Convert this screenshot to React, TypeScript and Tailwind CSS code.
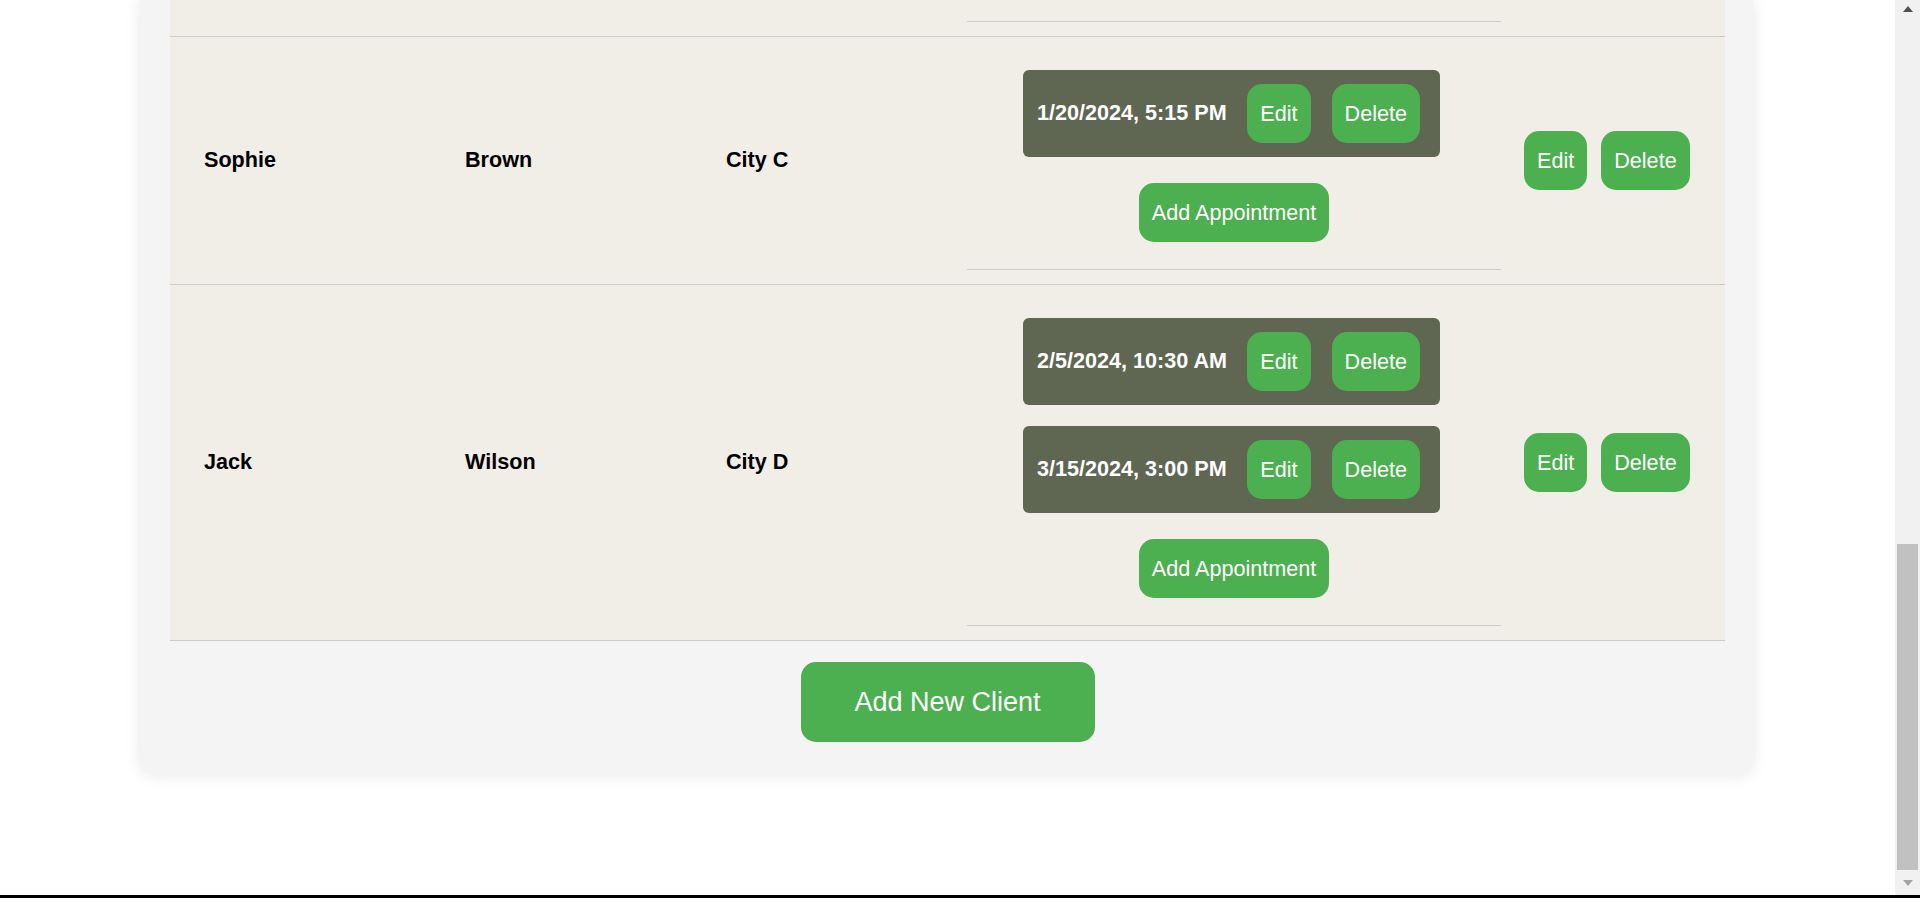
import React from "react";

interface IClient {
  id: number;
  firstName: string;
  lastName: string;
  city: string;
  appointments: string[];
}

const clients: IClient[] = [
  { id: 3, firstName: "Sophie", lastName: "Brown", city: "City C", appointments: ["1/20/2024, 5:15 PM"] },
  {
    id: 4,
    firstName: "Jack",
    lastName: "Wilson",
    city: "City D",
    appointments: ["2/5/2024, 10:30 AM", "3/15/2024, 3:00 PM"],
  },
];

const GreenButton = ({ label }: { label: string }) => (
  <button className="h-[59px] px-[13px] rounded-[15px] bg-[#4caf50] text-white text-[21.6px] leading-none whitespace-nowrap">
    {label}
  </button>
);

const AppointmentCard = ({ date }: { date: string }) => (
  <div className="w-[417px] flex flex-row items-center justify-between py-[14px] pl-[14px] pr-[20px] rounded-[6px] bg-[#5f6652]">
    <span className="text-white font-bold text-[21.6px] whitespace-nowrap">{date}</span>
    <div className="flex flex-row gap-[21px]">
      <GreenButton label="Edit" />
      <GreenButton label="Delete" />
    </div>
  </div>
);

const ClientRow = ({ client }: { client: IClient }) => (
  <div className="grid grid-cols-[261px_261px_263px_558px_212px] border-b border-[#cccccc]">
    <div className="flex items-center pl-[34px] font-bold text-[21.6px] text-black">{client.firstName}</div>
    <div className="flex items-center pl-[34px] font-bold text-[21.6px] text-black">{client.lastName}</div>
    <div className="flex items-center pl-[34px] font-bold text-[21.6px] text-black">{client.city}</div>
    <div className="px-[12px] pt-[33px] pb-[14px]">
      <div className="flex flex-col items-center pb-[27px] border-b border-[#cccccc]">
        <div className="flex flex-col gap-[21px] mr-[5px]">
          {client.appointments.map((a) => (
            <AppointmentCard key={a} date={a} />
          ))}
        </div>
        <div className="mt-[26px]">
          <GreenButton label="Add Appointment" />
        </div>
      </div>
    </div>
    <div className="flex flex-row items-center gap-[14px] pl-[11px]">
      <GreenButton label="Edit" />
      <GreenButton label="Delete" />
    </div>
  </div>
);

const Scrollbar = () => (
  <div className="w-[25px] h-full flex flex-col bg-[#f1f1f1]">
    <div className="h-[25px] flex items-center justify-center">
      <div className="w-0 h-0 border-l-[5px] border-r-[5px] border-b-[6px] border-l-transparent border-r-transparent border-b-[#505050] -mt-[7px]" />
    </div>
    <div className="flex-1 flex flex-col justify-end px-[2px]">
      <div className="h-[326px] bg-[#c1c1c1]" />
    </div>
    <div className="h-[25px] flex items-center justify-center">
      <div className="w-0 h-0 border-l-[5px] border-r-[5px] border-t-[6px] border-l-transparent border-r-transparent border-t-[#a3a3a3]" />
    </div>
  </div>
);

export default function App() {
  return (
    <div className="w-[1920px] h-[898px] flex flex-col bg-white overflow-hidden font-['Liberation_Sans',Arial,sans-serif]">
      <div className="flex flex-row h-[895px]">
        <div className="w-[1895px] h-full">
          <div className="ml-[140px] w-[1613px] pl-[30px] pr-[28px] pb-[33px] bg-[#f4f4f4] rounded-b-[15px] shadow-[0_0_16px_rgba(0,0,0,0.1)]">
            <div className="bg-[#f1eee8]">
              <div className="h-[37px] grid grid-cols-[261px_261px_263px_558px_212px] border-b border-[#cccccc]">
                <div />
                <div />
                <div />
                <div className="px-[12px]">
                  <div className="h-[22px] border-b border-[#cccccc]" />
                </div>
                <div />
              </div>
              {clients.map((c) => (
                <ClientRow key={c.id} client={c} />
              ))}
            </div>
            <div className="flex justify-center mt-[21px]">
              <button className="h-[80px] w-[294px] rounded-[15px] bg-[#4caf50] text-white text-[27px]">
                Add New Client
              </button>
            </div>
          </div>
        </div>
        <Scrollbar />
      </div>
      <div className="h-[3px] bg-black" />
    </div>
  );
}
